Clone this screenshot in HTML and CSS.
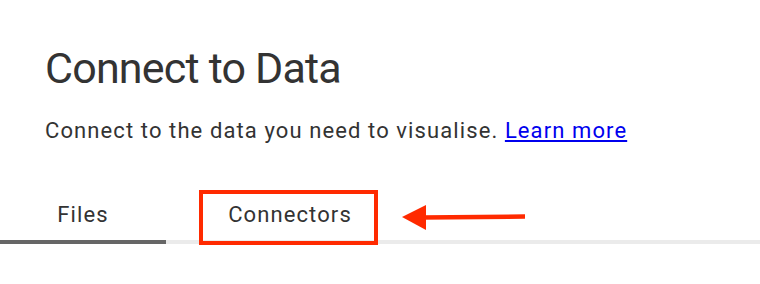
FILE: index.html
```html
<!DOCTYPE html>
<html lang="en">
<head>
    <meta charset="UTF-8">
    <title>Connect to Data</title>
    <link rel="stylesheet" href="styles.css">
</head>
<body>
    <div class="connect-page">
        <div class="connect-header">
            <h1>Connect to Data</h1>
            <p>Connect to the data you need to visualise. <a href="#">Learn more</a></p>
        </div>

        <div class="tabs">
            <div class="tab tab-files active">Files</div>
            <div class="tab tab-connectors">Connectors</div>
            <div class="tab-rest"></div>
        </div>

        <!-- annotation -->
        <div class="callout-box"></div>
        <svg class="callout-arrow" width="130" height="30" viewBox="0 0 130 30">
            <polygon points="0,12 24,0 24,25" fill="#ff2a00"/>
            <line x1="20" y1="12.5" x2="123" y2="11.5" stroke="#ff2a00" stroke-width="4.5"/>
        </svg>
    </div>
</body>
</html>
```

FILE: styles.css
```css
body {
    margin: 0;
    background: #fff;
    font-family: Roboto, "Liberation Sans", sans-serif;
    color: #333;
}

.connect-page {
    position: relative;
    width: 760px;
    height: 284px;
    overflow: hidden;
}

.connect-header {
    padding: 40px 0 0 45px;
}

.connect-header h1 {
    margin: 0;
    font-size: 43px;
    font-weight: 400;
    line-height: 56px;
    letter-spacing: -0.8px;
}

.connect-header p {
    margin: 20px 0 0 0;
    font-size: 22px;
    line-height: 30px;
    letter-spacing: 1.1px;
}

.connect-header a {
    color: #0000ee;
}

.tabs {
    display: flex;
    margin-top: 54px;
}

.tab {
    padding-bottom: 10px;
    font-size: 22px;
    line-height: 30px;
    letter-spacing: 1.1px;
    text-align: center;
    border-bottom: 4px solid #ebebeb;
}

.tab-files {
    width: 166px;
}

.tab-connectors {
    width: 248px;
}

.tab.active {
    border-bottom-color: #666;
}

.tab-rest {
    flex: 1;
    border-bottom: 4px solid #ebebeb;
}

.callout-box {
    position: absolute;
    left: 199px;
    top: 190px;
    width: 171px;
    height: 47px;
    border: 4px solid #ff2a00;
}

.callout-arrow {
    position: absolute;
    left: 402px;
    top: 205px;
}
```
